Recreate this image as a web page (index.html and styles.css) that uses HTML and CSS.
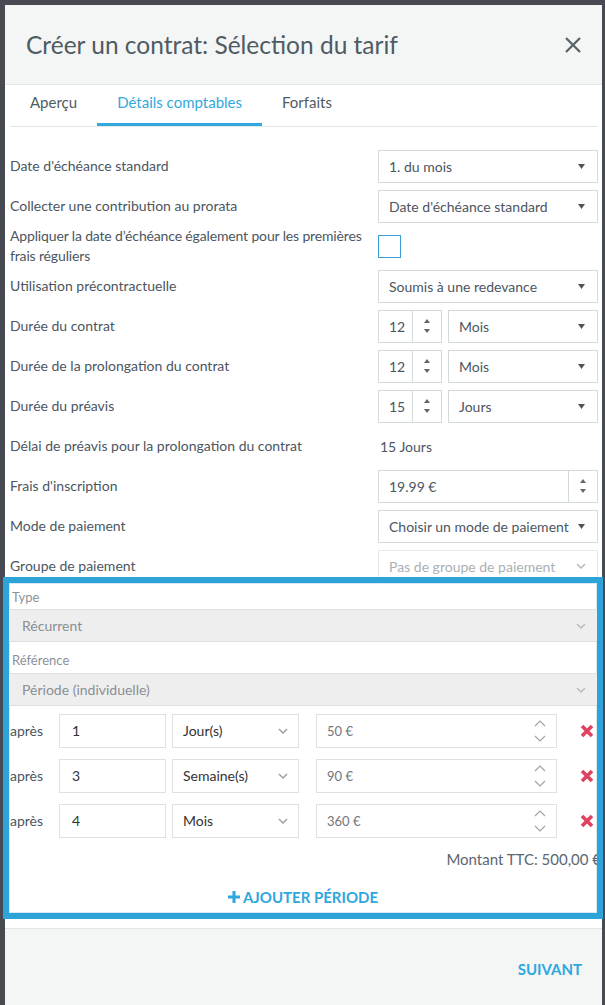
FILE: index.html
```html
<!DOCTYPE html>
<html lang="fr">
<head>
    <meta charset="UTF-8">
    <meta name="viewport" content="width=device-width, initial-scale=1.0">
    <title>Créer un contrat</title>
    <link rel="stylesheet" href="styles.css">
</head>
<body>

<div class="modal">
    <div class="modal-header">
        <h1>Créer un contrat: Sélection du tarif</h1>
        <button class="close" aria-label="Fermer">
            <svg width="18" height="18" viewBox="0 0 18 18"><path d="M2 2L16 16M16 2L2 16" stroke="#5a666e" stroke-width="2.4" fill="none"/></svg>
        </button>
    </div>

    <div class="modal-body">
        <!-- Onglets -->
        <div class="tabs">
            <span class="tab">Aperçu</span>
            <span class="tab active">Détails comptables</span>
            <span class="tab">Forfaits</span>
        </div>

        <div class="form">
            <div class="row">
                <label>Date d'échéance standard</label>
                <div class="field"><div class="input select"><span>1. du mois</span><svg class="caret" width="7" height="5" viewBox="0 0 7 5"><path d="M0 0H7L3.5 5Z"/></svg></div></div>
            </div>
            <div class="row">
                <label>Collecter une contribution au prorata</label>
                <div class="field"><div class="input select"><span>Date d'échéance standard</span><svg class="caret" width="7" height="5" viewBox="0 0 7 5"><path d="M0 0H7L3.5 5Z"/></svg></div></div>
            </div>
            <div class="row">
                <label class="wide">Appliquer la date d’échéance également pour les premières frais réguliers</label>
                <div class="field"><span class="checkbox"></span></div>
            </div>
            <div class="row">
                <label>Utilisation précontractuelle</label>
                <div class="field"><div class="input select"><span>Soumis à une redevance</span><svg class="caret" width="7" height="5" viewBox="0 0 7 5"><path d="M0 0H7L3.5 5Z"/></svg></div></div>
            </div>
            <div class="row">
                <label>Durée du contrat</label>
                <div class="field">
                    <div class="input number"><span class="num">12</span><span class="spin"><svg width="6" height="16" viewBox="0 0 6 16"><path d="M3 1L6 5H0Z M0 11H6L3 15Z"/></svg></span></div>
                    <div class="input select"><span>Mois</span><svg class="caret" width="7" height="5" viewBox="0 0 7 5"><path d="M0 0H7L3.5 5Z"/></svg></div>
                </div>
            </div>
            <div class="row">
                <label>Durée de la prolongation du contrat</label>
                <div class="field">
                    <div class="input number"><span class="num">12</span><span class="spin"><svg width="6" height="16" viewBox="0 0 6 16"><path d="M3 1L6 5H0Z M0 11H6L3 15Z"/></svg></span></div>
                    <div class="input select"><span>Mois</span><svg class="caret" width="7" height="5" viewBox="0 0 7 5"><path d="M0 0H7L3.5 5Z"/></svg></div>
                </div>
            </div>
            <div class="row">
                <label>Durée du préavis</label>
                <div class="field">
                    <div class="input number"><span class="num">15</span><span class="spin"><svg width="6" height="16" viewBox="0 0 6 16"><path d="M3 1L6 5H0Z M0 11H6L3 15Z"/></svg></span></div>
                    <div class="input select"><span>Jours</span><svg class="caret" width="7" height="5" viewBox="0 0 7 5"><path d="M0 0H7L3.5 5Z"/></svg></div>
                </div>
            </div>
            <div class="row">
                <label>Délai de préavis pour la prolongation du contrat</label>
                <div class="field"><span class="value">15 Jours</span></div>
            </div>
            <div class="row">
                <label>Frais d'inscription</label>
                <div class="field">
                    <div class="input money"><span class="num">19.99 €</span><span class="spin"><svg width="6" height="16" viewBox="0 0 6 16"><path d="M3 1L6 5H0Z M0 11H6L3 15Z"/></svg></span></div>
                </div>
            </div>
            <div class="row">
                <label>Mode de paiement</label>
                <div class="field"><div class="input select"><span>Choisir un mode de paiement</span><svg class="caret" width="7" height="5" viewBox="0 0 7 5"><path d="M0 0H7L3.5 5Z"/></svg></div></div>
            </div>
            <div class="row">
                <label>Groupe de paiement</label>
                <div class="field"><div class="input select disabled"><span>Pas de groupe de paiement</span><svg width="10" height="6" viewBox="0 0 10 6"><path d="M1 1L5 5L9 1" fill="none" stroke="#b4b9bd" stroke-width="1.5"/></svg></div></div>
            </div>
        </div>

        <!-- Zone mise en évidence -->
        <div class="highlight">
            <div class="hl-label">Type</div>
            <div class="hl-select"><span>Récurrent</span><svg width="10" height="6" viewBox="0 0 10 6"><path d="M1 1L5 5L9 1" fill="none" stroke="#b9bdc1" stroke-width="1.5"/></svg></div>
            <div class="hl-label ref">Référence</div>
            <div class="hl-select"><span>Période (individuelle)</span><svg width="10" height="6" viewBox="0 0 10 6"><path d="M1 1L5 5L9 1" fill="none" stroke="#b9bdc1" stroke-width="1.5"/></svg></div>

            <div class="periods">
                <div class="period">
                    <span class="period-label">après</span>
                    <div class="p-num">1</div>
                    <div class="p-unit"><span>Jour(s)</span><svg width="10" height="6" viewBox="0 0 10 6"><path d="M1 1L5 5L9 1" fill="none" stroke="#9ca2a6" stroke-width="1.5"/></svg></div>
                    <div class="p-amount"><span>50 €</span><svg width="12" height="22" viewBox="0 0 12 22"><path d="M1 6L6 1L11 6M1 16L6 21L11 16" fill="none" stroke="#9ca2a6" stroke-width="1.2"/></svg></div>
                    <span class="p-delete"><svg width="14" height="14" viewBox="0 0 14 14"><path d="M2 2L12 12M12 2L2 12" stroke="#e0435f" stroke-width="3.6"/></svg></span>
                </div>
                <div class="period">
                    <span class="period-label">après</span>
                    <div class="p-num">3</div>
                    <div class="p-unit"><span>Semaine(s)</span><svg width="10" height="6" viewBox="0 0 10 6"><path d="M1 1L5 5L9 1" fill="none" stroke="#9ca2a6" stroke-width="1.5"/></svg></div>
                    <div class="p-amount"><span>90 €</span><svg width="12" height="22" viewBox="0 0 12 22"><path d="M1 6L6 1L11 6M1 16L6 21L11 16" fill="none" stroke="#9ca2a6" stroke-width="1.2"/></svg></div>
                    <span class="p-delete"><svg width="14" height="14" viewBox="0 0 14 14"><path d="M2 2L12 12M12 2L2 12" stroke="#e0435f" stroke-width="3.6"/></svg></span>
                </div>
                <div class="period">
                    <span class="period-label">après</span>
                    <div class="p-num">4</div>
                    <div class="p-unit"><span>Mois</span><svg width="10" height="6" viewBox="0 0 10 6"><path d="M1 1L5 5L9 1" fill="none" stroke="#9ca2a6" stroke-width="1.5"/></svg></div>
                    <div class="p-amount"><span>360 €</span><svg width="12" height="22" viewBox="0 0 12 22"><path d="M1 6L6 1L11 6M1 16L6 21L11 16" fill="none" stroke="#9ca2a6" stroke-width="1.2"/></svg></div>
                    <span class="p-delete"><svg width="14" height="14" viewBox="0 0 14 14"><path d="M2 2L12 12M12 2L2 12" stroke="#e0435f" stroke-width="3.6"/></svg></span>
                </div>
            </div>

            <div class="total">Montant TTC: 500,00 €</div>
            <button class="add-btn"><svg width="12" height="12" viewBox="0 0 12 12"><path d="M6 0V12M0 6H12" stroke="#2ea7de" stroke-width="3"/></svg>Ajouter période</button>
        </div>
    </div>

    <div class="modal-footer">
        <a class="next-btn">Suivant</a>
    </div>
</div>

</body>
</html>
```

FILE: styles.css
```css
body { margin: 0; background-color: #474a52; font-family: Lato, "Open Sans", sans-serif; font-size: 14px; color: #4b565f; }
.modal { width: 597px; margin: 5px 0 0 5px; background-color: #fff; }

/* En-tête */
.modal-header { height: 79px; display: flex; align-items: center; justify-content: space-between; padding: 0 20px 0 21px; background-color: #f4f6f6; border-bottom: 1px solid #e2e6e8; }
.modal-header h1 { margin: 0; font-size: 24.5px; font-weight: normal; color: #4f5b63; }
.close { border: none; background: none; padding: 0; display: flex; cursor: pointer; }

.modal-body { padding: 0 4px 0 5px; }

/* Onglets */
.tabs { display: flex; border-bottom: 1px solid #e3e7e9; }
.tab { padding: 7px 20px 11px; line-height: 20px; font-size: 15px; color: #4f5b63; border-bottom: 3px solid transparent; }
.tab.active { color: #33a8dc; border-bottom-color: #33a8dc; }

/* Formulaire */
.form { padding-top: 19px; }
.row { display: flex; align-items: center; min-height: 40px; }
.row label { width: 368px; padding-right: 14px; box-sizing: border-box; line-height: 20px; }
.row label.wide { padding-right: 0; letter-spacing: -0.15px; }
.field { width: 220px; display: flex; gap: 6px; align-items: center; }
.input { height: 33px; box-sizing: border-box; border: 1px solid #d3dadd; display: flex; align-items: center; }
.select { flex: 1; justify-content: space-between; padding: 0 12px 0 10px; }
.select .caret { fill: #555; }
.select.disabled { border-color: #e6e9eb; color: #aab0b4; padding-right: 11px; }
.number { width: 64px; flex: none; }
.money { flex: 1; }
.num { flex: 1; padding-left: 10px; }
.spin { width: 28px; height: 100%; border-left: 1px solid #d3dadd; display: flex; align-items: center; justify-content: center; fill: #666; }
.checkbox { width: 23px; height: 23px; box-sizing: border-box; border: 1px solid #3a9fd5; }
.value { padding-left: 2px; }

/* Zone mise en évidence */
.highlight { position: relative; z-index: 1; margin: -9px -5px 9px -7px; border: 6px solid #2ea3da; background-color: #fff; box-shadow: inset 0 0 0 1px #d4ebf6; overflow: hidden; }
.hl-label { padding: 4px 3px 2px; line-height: 20px; font-size: 13px; color: #8c9297; }
.hl-label.ref { padding-top: 8px; padding-bottom: 3px; }
.hl-select { height: 33px; box-sizing: border-box; background-color: #eeeeef; border-top: 1px solid #dfe0e2; border-bottom: 1px solid #dfe0e2; display: flex; align-items: center; justify-content: space-between; padding: 0 11px 0 13px; color: #8a8f93; }

.periods { padding-top: 2px; }
.period { display: flex; align-items: center; height: 45px; }
.period-label { width: 49px; padding-left: 1px; }
.p-num, .p-unit, .p-amount { height: 34px; box-sizing: border-box; border: 1px solid #dde1e3; display: flex; align-items: center; }
.p-num { width: 107px; padding-left: 12px; color: #333; margin-right: 6px; }
.p-unit { width: 127px; padding: 0 10px; justify-content: space-between; color: #333; margin-right: 17px; }
.p-amount { width: 241px; padding: 0 10px; justify-content: space-between; font-size: 13px; color: #6f777d; }
.p-delete { margin-left: 23px; display: flex; }

.total { margin: 6px -4px 0 0; text-align: right; line-height: 20px; font-size: 15px; color: #5b6770; white-space: nowrap; }
.add-btn { display: flex; align-items: center; gap: 3px; height: 30px; margin: 13px auto 1px; padding: 0; border: none; background: none; font-family: inherit; font-size: 15px; font-weight: bold; color: #2ea7de; text-transform: uppercase; cursor: pointer; }

/* Pied */
.modal-footer { padding: 30px 20px; text-align: right; background-color: #f4f6f6; border-top: 1px solid #e1e5e7; }
.next-btn { line-height: 20px; font-size: 15px; font-weight: bold; color: #2ea7de; text-transform: uppercase; cursor: pointer; }
```
